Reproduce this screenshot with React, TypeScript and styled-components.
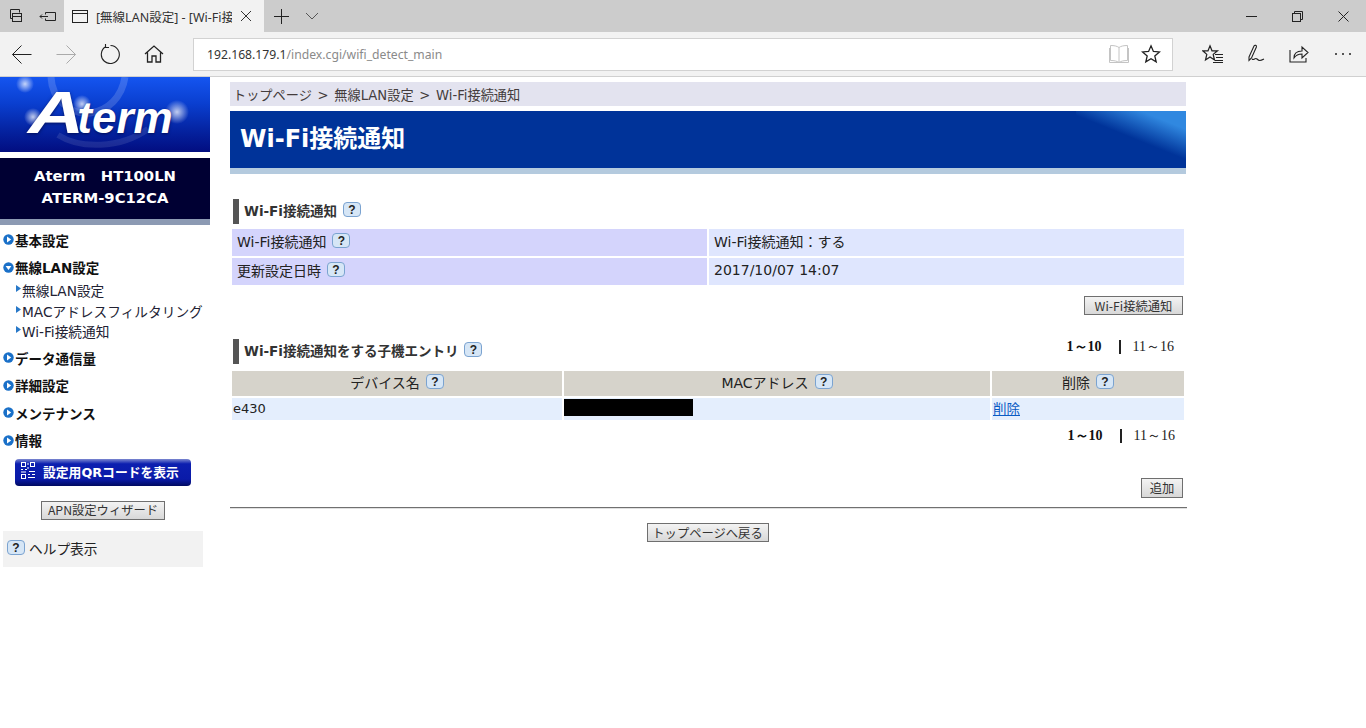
import React from "react"
import styled, { createGlobalStyle } from "styled-components"

const GlobalStyle = createGlobalStyle`
    html, body {
        margin: 0;
        padding: 0;
        background: #fff;
        font-family: "DejaVu Sans", "Noto Sans CJK JP", sans-serif;
        font-size: 14px;
        color: #222;
    }
`

const Page = styled.div`
    width: 1366px;
    height: 728px;
    overflow: hidden;
    display: flex;
    flex-direction: column;
`

/* browser frame */
const TabStrip = styled.div`
    height: 32px;
    background: #cccccc;
    display: flex;
    align-items: stretch;
`

const StripButton = styled.div<{ w: number }>`
    width: ${(p) => p.w}px;
    display: flex;
    align-items: center;
    justify-content: center;
    flex: none;
`

const Tab = styled.div`
    width: 200px;
    flex: none;
    background: #f2f2f2;
    display: flex;
    align-items: center;
    padding-left: 8px;
    box-sizing: border-box;
`

const TabTitle = styled.div`
    width: 136px;
    margin-left: 8px;
    overflow: hidden;
    white-space: nowrap;
    font-family: "Noto Sans", "Noto Sans CJK JP", sans-serif;
    font-size: 12.5px;
    color: #333;
`

const StripSpacer = styled.div`
    flex: 1;
`

const Toolbar = styled.div`
    height: 44px;
    background: #f2f2f2;
    display: flex;
    align-items: center;
    border-bottom: 1px solid #d0d0d0;
    box-sizing: content-box;
`

const ToolButton = styled.div<{ w: number }>`
    width: ${(p) => p.w}px;
    height: 44px;
    flex: none;
    display: flex;
    align-items: center;
    justify-content: center;
`

const AddressBar = styled.div`
    width: 980px;
    height: 33px;
    margin-left: 17px;
    margin-right: 18px;
    flex: none;
    box-sizing: border-box;
    background: #fff;
    border: 1px solid #d2d2d2;
    display: flex;
    align-items: center;
    padding-left: 13px;
    font-family: "Noto Sans", sans-serif;
    font-size: 12.2px;
    color: #8a8a8a;
`

const Host = styled.span`
    color: #333;
`

const AddressIcons = styled.div`
    margin-left: auto;
    display: flex;
    align-items: center;
    gap: 12px;
    padding-right: 11px;
`

/* page */
const Content = styled.div`
    flex: 1;
    display: flex;
    align-items: flex-start;
`

const Sidebar = styled.div`
    width: 210px;
    flex: none;
`

const Logo = styled.div`
    height: 75px;
    position: relative;
    overflow: hidden;
    background: linear-gradient(#1555f0 0%, #0a3fd0 35%, #04209c 75%, #020d80 100%);
`

const LogoArt = styled.svg`
    position: absolute;
    left: 0;
    top: 0;
`

const LogoText = styled.div`
    position: relative;
    display: flex;
    align-items: baseline;
    padding: 6px 0 0 28px;
    font-family: "Liberation Sans", sans-serif;
    font-style: italic;
    font-weight: bold;
    font-size: 44px;
    color: #fff;
    text-shadow: 0 1px 3px rgba(0, 0, 40, 0.6);
`

const LogoBig = styled.span`
    display: inline-block;
    font-size: 60px;
    line-height: 60px;
    transform: scaleX(1.3);
    transform-origin: left bottom;
    margin-right: 6px;
`

const DeviceBox = styled.div`
    margin-top: 6px;
    background: #000033;
    border-bottom: 6px solid #8c9ab3;
    color: #fff;
    font-weight: bold;
    font-size: 14.8px;
    line-height: 22px;
    text-align: center;
    padding-top: 7px;
    height: 54px;
    white-space: pre;
`

const Nav = styled.div`
    margin-top: 1px;
`

const NavItem = styled.div`
    height: 27.4px;
    display: flex;
    align-items: center;
    padding-left: 3px;
    gap: 1px;
    font-weight: bold;
    font-size: 13.5px;
    color: #111;
`

const SubNav = styled.div`
    margin-top: -1px;
    margin-bottom: 3px;
`

const SubItem = styled.div`
    height: 20.5px;
    display: flex;
    align-items: center;
    padding-left: 16px;
    gap: 1px;
    font-size: 13.7px;
    color: #223;
`

const QrButton = styled.div`
    width: 176px;
    height: 27px;
    margin: 5px 0 0 15px;
    padding: 0 0 2px 6px;
    box-sizing: border-box;
    border-radius: 4px;
    background: linear-gradient(#7c88d0 0%, #0c1fb0 18%, #0a1aa8 75%, #000a60 100%);
    color: #fff;
    font-weight: bold;
    font-size: 12.8px;
    display: flex;
    align-items: center;
    gap: 7px;
`

const PlainButton = styled.div<{ w: number; h?: number }>`
    width: ${(p) => p.w}px;
    height: ${(p) => p.h ?? 19}px;
    box-sizing: border-box;
    border: 1px solid #6f6f6f;
    background: linear-gradient(#f3f3f3, #d8d8d8);
    font-family: "Noto Sans CJK JP", sans-serif;
    font-size: 12.3px;
    color: #333;
    display: flex;
    align-items: center;
    justify-content: center;
    white-space: nowrap;
`

const ApnRow = styled.div`
    margin: 15px 0 0 41px;
`

const HelpBox = styled.div`
    width: 200px;
    height: 36px;
    margin: 11px 0 0 3px;
    background: #f2f2f2;
    display: flex;
    align-items: center;
    padding: 0 0 2px 4px;
    box-sizing: border-box;
    gap: 4px;
    font-size: 13.7px;
`

const HelpBadge = styled.span`
    width: 18px;
    height: 15px;
    flex: none;
    box-sizing: border-box;
    display: inline-flex;
    align-items: center;
    justify-content: center;
    border: 1px solid #7ba3d0;
    border-radius: 4px;
    background: #d6e6f6;
    font-family: "Liberation Sans", sans-serif;
    font-weight: bold;
    font-size: 12px;
    color: #222;
`

const Main = styled.div`
    width: 957px;
    margin-left: 20px;
    padding-top: 5px;
    flex: none;
`

const Breadcrumb = styled.div`
    width: 956px;
    height: 24px;
    background: #e3e3ef;
    display: flex;
    align-items: center;
    padding-left: 3px;
    box-sizing: border-box;
    font-size: 13.2px;
    word-spacing: 1.5px;
    color: #443c3c;
    white-space: pre;
`

const TitleBar = styled.div`
    width: 956px;
    height: 57px;
    margin-top: 5px;
    border-bottom: 6px solid #b4cade;
    background: linear-gradient(22deg, transparent 52%, #3088e0 82%) no-repeat right top / 110px 57px, #003399;
    display: flex;
    align-items: center;
`

const TitleText = styled.h1`
    margin: 0 0 7px 10px;
    font-size: 24px;
    font-weight: bold;
    color: #fff;
`

const SectionHead = styled.div<{ mt: number }>`
    height: 25px;
    margin: ${(p) => p.mt}px 0 0 3px;
    border-left: 6px solid #555;
    padding: 0 0 4px 5px;
    box-sizing: border-box;
    display: flex;
    align-items: center;
    gap: 6px;
    font-weight: bold;
    font-size: 13.5px;
    color: #333;
`

const HeadRow = styled.div`
    display: flex;
    justify-content: space-between;
    align-items: flex-start;
    width: 956px;
`

const Grid = styled.div<{ cols: string; mt: number }>`
    display: grid;
    grid-template-columns: ${(p) => p.cols};
    gap: 2px;
    margin: ${(p) => p.mt}px 0 0 2px;
    width: 952px;
`

const LabelCell = styled.div`
    height: 27px;
    background: #d4d4fc;
    display: flex;
    align-items: center;
    padding: 0 0 4px 5px;
    box-sizing: border-box;
    gap: 6px;
    color: #222;
`

const ValueCell = styled.div`
    height: 27px;
    background: #dfe6fe;
    display: flex;
    align-items: center;
    padding: 0 0 4px 5px;
    box-sizing: border-box;
    color: #222;
`

const ColHead = styled.div`
    height: 25px;
    background: #d6d3cb;
    display: flex;
    align-items: center;
    justify-content: center;
    padding-bottom: 4px;
    box-sizing: border-box;
    gap: 6px;
    color: #222;
`

const BodyCell = styled.div`
    height: 22px;
    background: #e4eefd;
    display: flex;
    align-items: center;
    padding: 0 0 2px 1px;
    box-sizing: border-box;
    font-size: 13px;
    color: #222;
`

const Redacted = styled.div`
    width: 129px;
    height: 17px;
    margin: -2px 0 0 -1px;
    background: #000;
`

const DeleteLink = styled.a`
    font-size: 13.5px;
    color: #0a5bc4;
    text-decoration: underline;
`

const ButtonRow = styled.div<{ mt: number }>`
    display: flex;
    justify-content: flex-end;
    width: 956px;
    padding-right: 3px;
    box-sizing: border-box;
    margin-top: ${(p) => p.mt}px;
`

const Pager = styled.div<{ mt: number }>`
    display: flex;
    align-items: center;
    justify-content: flex-end;
    height: 16px;
    margin-top: ${(p) => p.mt}px;
    padding-right: 12px;
    font-family: "Liberation Serif", serif;
    font-size: 14px;
    color: #222;
`

const PagerCurrent = styled.b`
    color: #111;
`

const PagerSep = styled.span`
    width: 2px;
    height: 14px;
    background: #222;
    margin: 0 12px 0 17px;
`

const Rule = styled.hr`
    margin: 9px 0 0;
    width: 957px;
    height: 2px;
    box-sizing: border-box;
    border: 0;
    border-top: 1px solid #707070;
    border-bottom: 1px solid #e0e0e0;
`

const BackRow = styled.div`
    display: flex;
    justify-content: center;
    margin-top: 14px;
    width: 955px;
`

const Ico: React.FC<{ w?: number; h?: number; children: React.ReactNode; color?: string }> = ({
    w = 20,
    h = 20,
    children,
    color = "#222",
}) => (
    <svg width={w} height={h} viewBox={`0 0 ${w} ${h}`} fill="none" stroke={color} strokeWidth="1">
        {children}
    </svg>
)

const NavDot: React.FC<{ open?: boolean }> = ({ open }) => (
    <svg width="11" height="11" viewBox="0 0 11 11" style={{ flex: "none" }}>
        <circle cx="5.5" cy="5.5" r="5.2" fill="#1a70c8" />
        {open ? <path d="M2.6 4l5.8 0-2.9 4z" fill="#fff" /> : <path d="M4 2.4l4.2 3.1-4.2 3.1z" fill="#fff" />}
    </svg>
)

const SubArrow = () => (
    <svg width="5" height="7" viewBox="0 0 5 7" style={{ flex: "none", marginTop: -3 }}>
        <path d="M0 0l5 3.5-5 3.5z" fill="#2878c8" />
    </svg>
)

const QrIcon = () => (
    <svg width="15" height="18" viewBox="0 0 15 18" fill="none" stroke="#fff" style={{ flex: "none" }}>
        <rect x="0.5" y="0.5" width="4" height="4" />
        <rect x="9.5" y="0.5" width="4" height="4" />
        <rect x="0.5" y="12.5" width="4" height="4" />
        <path d="M0 7.5h2M4 7.5h2M7 1v2M7 5v2M8 9.5h6M7 12.5h2M11 12.5h3M7 15.5h7M0 10h5" />
    </svg>
)

const Star = ({ color = "#222" }: { color?: string }) => (
    <path d="M10 1.8l2.4 5.6 6 .5-4.6 4 1.4 5.9L10 14.7 4.8 17.8l1.4-5.9-4.6-4 6-.5z" stroke={color} strokeWidth="1.3" />
)

const App: React.FC = () => {
    return (
        <Page>
            <GlobalStyle />
            <TabStrip>
                <StripButton w={32}>
                    <Ico w={16} h={16}>
                        <path d="M2.5 1.5h9v3M2.5 1.5v9h2" />
                        <rect x="4.5" y="5.5" width="9" height="8" />
                        <path d="M4.5 8.5h9" />
                    </Ico>
                </StripButton>
                <StripButton w={32}>
                    <Ico w={18} h={14}>
                        <path d="M6.5 3.5h10v8h-10v-2M1 7.5h8M3 5.500L1 7.500l2 2M6.5 3.5v2" />
                    </Ico>
                </StripButton>
                <Tab>
                    <Ico w={16} h={14}>
                        <rect x="0.5" y="1.5" width="15" height="12" />
                        <path d="M0.5 4.5h15" />
                    </Ico>
                    <TabTitle>[無線LAN設定] - [Wi-Fi接続通知</TabTitle>
                    <StripButton w={28}>
                        <Ico w={12} h={12} color="#333">
                            <path d="M1 1l10 10M11 1L1 11" />
                        </Ico>
                    </StripButton>
                </Tab>
                <StripButton w={34}>
                    <Ico w={15} h={15}>
                        <path d="M7.5 0v15M0 7.5h15" />
                    </Ico>
                </StripButton>
                <StripButton w={28}>
                    <Ico w={14} h={8} color="#555">
                        <path d="M1 1l6 6 6-6" />
                    </Ico>
                </StripButton>
                <StripSpacer />
                <StripButton w={46}>
                    <Ico w={11} h={3}>
                        <path d="M0 1.5h11" />
                    </Ico>
                </StripButton>
                <StripButton w={46}>
                    <Ico w={11} h={11}>
                        <rect x="0.5" y="2.5" width="8" height="8" />
                        <path d="M2.5 2.5v-2h8v8h-2" />
                    </Ico>
                </StripButton>
                <StripButton w={46}>
                    <Ico w={11} h={11}>
                        <path d="M0.5 0.5l10 10M10.5 0.5l-10 10" />
                    </Ico>
                </StripButton>
            </TabStrip>
            <Toolbar>
                <ToolButton w={44}>
                    <Ico>
                        <path d="M0.5 10.5h19M9.5 1.500l-9 9 9 9" />
                    </Ico>
                </ToolButton>
                <ToolButton w={44}>
                    <Ico color="#aaa">
                        <path d="M0.5 10.5h19M10.5 1.500l9 9-9 9" />
                    </Ico>
                </ToolButton>
                <ToolButton w={44}>
                    <Ico>
                        <path d="M6 2.6A9 9 0 1 0 10.5 1.5M5.5 0v3.5H9" strokeWidth="1.1" />
                    </Ico>
                </ToolButton>
                <ToolButton w={44}>
                    <Ico>
                        <path d="M1 10L10 2l9 8M3.5 8.5v9.5h4.5v-6h4v6h4.5V8.5" strokeWidth="1.3" />
                    </Ico>
                </ToolButton>
                <AddressBar>
                    <Host>192.168.179.1</Host>/index.cgi/wifi_detect_main
                    <AddressIcons>
                        <Ico color="#c4c4c4">
                            <path d="M10 3.5C8 2 5 1.5 1.5 1.5v15c3.5 0 6.500 .5 8.500 2 2-1.500 5-2 8.500-2v-15C15 1.500 12 2 10 3.500zM10 3.500V18M0.500 4v14.500h19V4" />
                        </Ico>
                        <Ico>
                            <Star />
                        </Ico>
                    </AddressIcons>
                </AddressBar>
                <ToolButton w={44}>
                    <Ico w={22} h={20}>
                        <path d="M8 1.800l2 5h5.500l-4.300 3.600 1.300 5.600L8 13l-4.500 3 1.300-5.600L.8 6.800H6z" strokeWidth="1.200" />
                        <path d="M13 10.500h8M14 13.500h7M13 16.500h8M11 18.500h10" />
                    </Ico>
                </ToolButton>
                <ToolButton w={42}>
                    <Ico w={20} h={20}>
                        <path d="M3 13L8 2c.8-1.500 3-.5 2.400 1L5.500 14l-2.500 2.500zM6 15c2 2 3-2 5 0s3 2 7 0" strokeWidth="1.100" />
                    </Ico>
                </ToolButton>
                <ToolButton w={44}>
                    <Ico w={20} h={20}>
                        <path d="M1 6v12h16v-4M5 14c0-5 3-7 8-7V3l6 5.500-6 5.500v-4c-3.500 0-6 1-8 4z" strokeWidth="1.100" />
                    </Ico>
                </ToolButton>
                <ToolButton w={44}>
                    <Ico w={18} h={4}>
                        <circle cx="2" cy="2" r="1" fill="#222" stroke="none" />
                        <circle cx="9" cy="2" r="1" fill="#222" stroke="none" />
                        <circle cx="16" cy="2" r="1" fill="#222" stroke="none" />
                    </Ico>
                </ToolButton>
            </Toolbar>
            <Content>
                <Sidebar>
                    <Logo>
                        <LogoArt width="210" height="75" viewBox="0 0 210 75" fill="none">
                            <defs>
                                <radialGradient id="glow">
                                    <stop offset="0" stopColor="#fff" stopOpacity="0.75" />
                                    <stop offset="1" stopColor="#fff" stopOpacity="0" />
                                </radialGradient>
                            </defs>
                            <path d="M51 0C52 22 70 38 90 36 108 34 122 20 125 0" stroke="#fff" strokeOpacity="0.16" strokeWidth="7" />
                            <path d="M58 58C80 72 120 72 148 52" stroke="#fff" strokeOpacity="0.1" strokeWidth="6" />
                            <circle cx="25" cy="7" r="9" fill="url(#glow)" />
                            <circle cx="33" cy="40" r="9" fill="url(#glow)" />
                            <circle cx="82" cy="27" r="9" fill="url(#glow)" />
                            <circle cx="177" cy="35" r="12" fill="url(#glow)" />
                        </LogoArt>
                        <LogoText>
                            <LogoBig>A</LogoBig>term
                        </LogoText>
                    </Logo>
                    <DeviceBox>{"Aterm   HT100LN\nATERM-9C12CA"}</DeviceBox>
                    <Nav>
                        <NavItem>
                            <NavDot />
                            基本設定
                        </NavItem>
                        <NavItem>
                            <NavDot open />
                            無線LAN設定
                        </NavItem>
                        <SubNav>
                            <SubItem>
                                <SubArrow />
                                無線LAN設定
                            </SubItem>
                            <SubItem>
                                <SubArrow />
                                MACアドレスフィルタリング
                            </SubItem>
                            <SubItem>
                                <SubArrow />
                                Wi-Fi接続通知
                            </SubItem>
                        </SubNav>
                        <NavItem>
                            <NavDot />
                            データ通信量
                        </NavItem>
                        <NavItem>
                            <NavDot />
                            詳細設定
                        </NavItem>
                        <NavItem>
                            <NavDot />
                            メンテナンス
                        </NavItem>
                        <NavItem>
                            <NavDot />
                            情報
                        </NavItem>
                    </Nav>
                    <QrButton>
                        <QrIcon />
                        設定用QRコードを表示
                    </QrButton>
                    <ApnRow>
                        <PlainButton w={124}>APN設定ウィザード</PlainButton>
                    </ApnRow>
                    <HelpBox>
                        <HelpBadge>?</HelpBadge>
                        ヘルプ表示
                    </HelpBox>
                </Sidebar>
                <Main>
                    <Breadcrumb>{"トップページ > 無線LAN設定 > Wi-Fi接続通知"}</Breadcrumb>
                    <TitleBar>
                        <TitleText>Wi-Fi接続通知</TitleText>
                    </TitleBar>
                    <SectionHead mt={25}>
                        Wi-Fi接続通知
                        <HelpBadge>?</HelpBadge>
                    </SectionHead>
                    <Grid cols="475px 475px" mt={5}>
                        <LabelCell>
                            Wi-Fi接続通知
                            <HelpBadge>?</HelpBadge>
                        </LabelCell>
                        <ValueCell>Wi-Fi接続通知：する</ValueCell>
                        <LabelCell>
                            更新設定日時
                            <HelpBadge>?</HelpBadge>
                        </LabelCell>
                        <ValueCell>2017/10/07 14:07</ValueCell>
                    </Grid>
                    <ButtonRow mt={11}>
                        <PlainButton w={99}>Wi-Fi接続通知</PlainButton>
                    </ButtonRow>
                    <HeadRow>
                        <SectionHead mt={24}>
                            Wi-Fi接続通知をする子機エントリ
                            <HelpBadge>?</HelpBadge>
                        </SectionHead>
                        <Pager mt={24}>
                            <PagerCurrent>1～10</PagerCurrent>
                            <PagerSep />
                            11～16
                        </Pager>
                    </HeadRow>
                    <Grid cols="330px 426px 192px" mt={7}>
                        <ColHead>
                            デバイス名
                            <HelpBadge>?</HelpBadge>
                        </ColHead>
                        <ColHead>
                            MACアドレス
                            <HelpBadge>?</HelpBadge>
                        </ColHead>
                        <ColHead>
                            削除
                            <HelpBadge>?</HelpBadge>
                        </ColHead>
                        <BodyCell>e430</BodyCell>
                        <BodyCell>
                            <Redacted />
                        </BodyCell>
                        <BodyCell>
                            <DeleteLink href="#">削除</DeleteLink>
                        </BodyCell>
                    </Grid>
                    <Pager mt={8}>
                        <PagerCurrent>1～10</PagerCurrent>
                        <PagerSep />
                        11～16
                    </Pager>
                    <ButtonRow mt={34}>
                        <PlainButton w={42} h={20}>
                            追加
                        </PlainButton>
                    </ButtonRow>
                    <Rule />
                    <BackRow>
                        <PlainButton w={122}>トップページへ戻る</PlainButton>
                    </BackRow>
                </Main>
            </Content>
        </Page>
    )
}

export default App
